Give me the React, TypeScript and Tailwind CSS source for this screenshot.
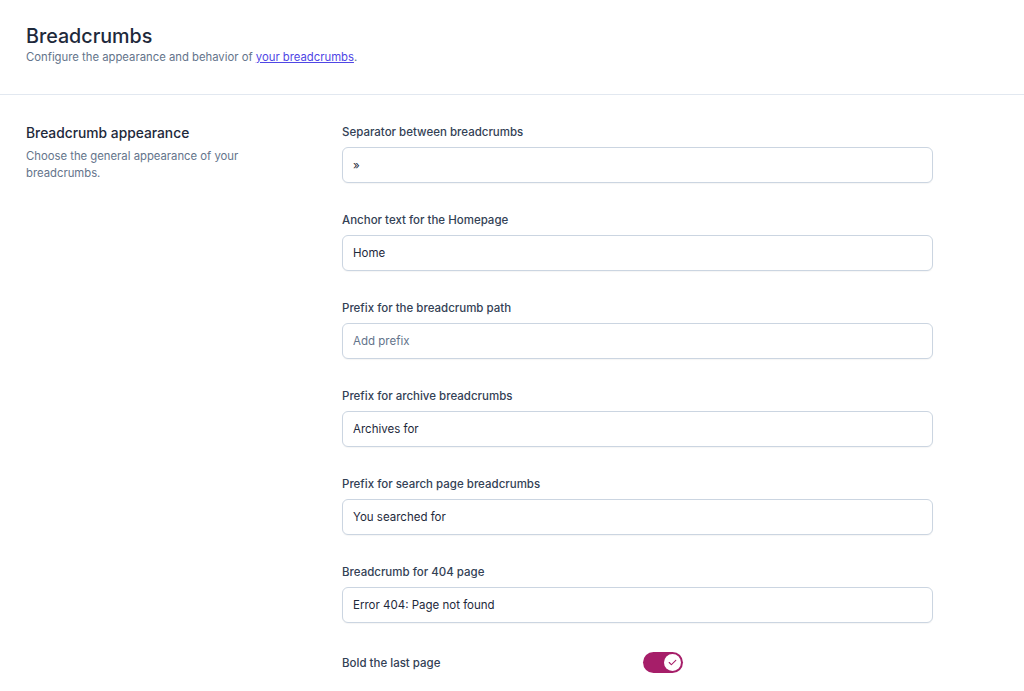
import React from "react";

const fields = [
  { label: "Separator between breadcrumbs", value: "»" },
  { label: "Anchor text for the Homepage", value: "Home" },
  { label: "Prefix for the breadcrumb path", value: "", placeholder: "Add prefix" },
  { label: "Prefix for archive breadcrumbs", value: "Archives for" },
  { label: "Prefix for search page breadcrumbs", value: "You searched for" },
  { label: "Breadcrumb for 404 page", value: "Error 404: Page not found" },
];

export default function App() {
  return (
    <div
      className="min-h-[691px] w-full bg-white text-[#1e293b]"
      style={{ fontFamily: "Inter, 'Noto Sans', sans-serif" }}
    >
      <div className="px-[26px] pt-[22px] pb-[30px]">
        <h1 className="text-[19.7px] leading-[28px] font-medium text-[#1e293b]">Breadcrumbs</h1>
        <p className="text-[11.3px] leading-[14px] text-[#64748b]">
          Configure the appearance and behavior of{" "}
          <a href="#" className="text-[#4f46e5] underline">your breadcrumbs</a>.
        </p>
      </div>
      <div className="h-px bg-[#e2e8f0]" />
      <div className="flex px-[26px] pt-[29px]">
        <div className="w-[316px] shrink-0">
          <h2 className="text-[13.8px] leading-[18px] font-medium text-[#1e293b]">Breadcrumb appearance</h2>
          <p className="mt-[6px] w-[230px] text-[11.3px] leading-[17px] text-[#64748b]">
            Choose the general appearance of your breadcrumbs.
          </p>
        </div>
        <div className="w-[591px]">
          {fields.map((f) => (
            <div key={f.label} className="mb-[29px]">
              <label className="block text-[11.5px] leading-[16px] font-medium text-[#334155]">{f.label}</label>
              <input
                readOnly
                value={f.value}
                placeholder={f.placeholder}
                className="mt-[7px] block h-[36px] w-full rounded-[6px] border border-[#cbd5e1] bg-white px-[10px] text-[11.5px] text-[#1e293b] placeholder:text-[#64748b] outline-none shadow-[0_1px_1px_rgba(0,0,0,0.04)]"
              />
            </div>
          ))}
          <div className="flex items-center">
            <span className="w-[301px] text-[11.5px] leading-[16px] font-medium text-[#334155]">Bold the last page</span>
            <div className="flex h-[21px] w-[40px] items-center justify-end rounded-full bg-[#a61e69] px-[2px]">
              <div className="flex h-[17px] w-[17px] items-center justify-center rounded-full bg-white">
                <svg width="11" height="11" viewBox="0 0 20 20" fill="#a61e69">
                  <path fillRule="evenodd" d="M16.707 5.293a1 1 0 010 1.414l-8 8a1 1 0 01-1.414 0l-4-4a1 1 0 011.414-1.414L8 12.586l7.293-7.293a1 1 0 011.414 0z" clipRule="evenodd" />
                </svg>
              </div>
            </div>
          </div>
        </div>
      </div>
    </div>
  );
}
